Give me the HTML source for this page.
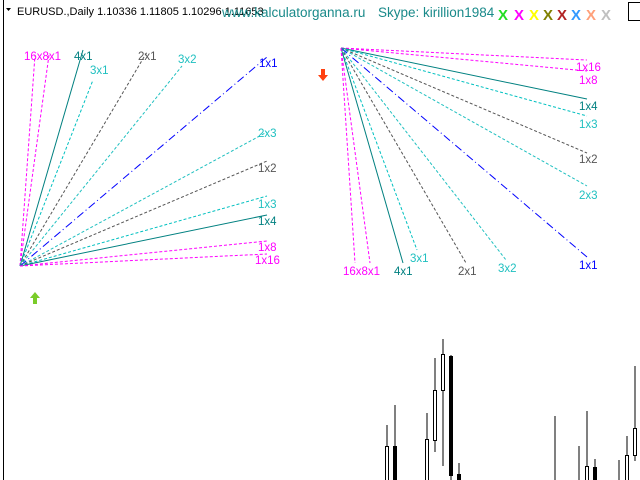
<!DOCTYPE html><html><head><style>body{margin:0;width:640px;height:480px;background:#fff;overflow:hidden;position:relative;font-family:"Liberation Sans",sans-serif}</style></head><body>
<svg width="640" height="480" style="position:absolute;left:0;top:0" font-family="Liberation Sans, sans-serif">
<line x1="3.5" y1="0" x2="3.5" y2="480" stroke="#000"/>
<path d="M6 8l5 0-2.5 3z" fill="#000"/>
<text x="17" y="15" font-size="11" fill="#000">EURUSD.,Daily  1.10336 1.11805 1.10296 1.11653</text>
<text x="222" y="17" font-size="13.5" fill="#1a8a8a">www.kalculatorganna.ru</text>
<text x="378" y="17" font-size="13.5" fill="#1a8a8a">Skype: kirillion1984</text>
<g font-size="15" font-weight="bold"><text x="498" y="20" fill="#22dd22">X</text><text x="514" y="20" fill="#ff00ff">X</text><text x="529" y="20" fill="#ffff00">X</text><text x="543" y="20" fill="#808000">X</text><text x="557" y="20" fill="#b22222">X</text><text x="571" y="20" fill="#3399ff">X</text><text x="586" y="20" fill="#ffa07a">X</text><text x="601" y="20" fill="#c0c0c0">X</text></g>
<rect x="628.5" y="2.5" width="14" height="18" fill="none" stroke="#000"/>
<g fill="none" stroke-width="1">
<line x1="20" y1="266" x2="35" y2="55" stroke="#f0f" stroke-dasharray="3,2"/>
<line x1="20" y1="266" x2="49" y2="55" stroke="#f0f" stroke-dasharray="3,2"/>
<line x1="20" y1="266" x2="83" y2="50" stroke="#008080"/>
<line x1="20" y1="266" x2="93" y2="80" stroke="#00c0c0" stroke-dasharray="3,2"/>
<line x1="20" y1="266" x2="147" y2="52" stroke="#555" stroke-dasharray="3,2"/>
<line x1="20" y1="266" x2="182" y2="66" stroke="#20c0c0" stroke-dasharray="3,2"/>
<line x1="20" y1="266" x2="267" y2="57" stroke="#00f" stroke-dasharray="8,3,1,3"/>
<line x1="20" y1="266" x2="267" y2="132" stroke="#20c0c0" stroke-dasharray="3,2"/>
<line x1="20" y1="266" x2="267" y2="161" stroke="#555" stroke-dasharray="3,2"/>
<line x1="20" y1="266" x2="267" y2="196" stroke="#00c0c0" stroke-dasharray="3,2"/>
<line x1="20" y1="266" x2="267" y2="215" stroke="#008080"/>
<line x1="20" y1="266" x2="267" y2="241" stroke="#f0f" stroke-dasharray="3,2"/>
<line x1="20" y1="266" x2="267" y2="254" stroke="#f0f" stroke-dasharray="3,2"/>
<line x1="341" y1="48" x2="587" y2="60" stroke="#f0f" stroke-dasharray="3,2"/>
<line x1="341" y1="48" x2="587" y2="71" stroke="#f0f" stroke-dasharray="3,2"/>
<line x1="341" y1="48" x2="587" y2="99" stroke="#008080"/>
<line x1="341" y1="48" x2="587" y2="116" stroke="#00c0c0" stroke-dasharray="3,2"/>
<line x1="341" y1="48" x2="587" y2="153" stroke="#555" stroke-dasharray="3,2"/>
<line x1="341" y1="48" x2="587" y2="186" stroke="#20c0c0" stroke-dasharray="3,2"/>
<line x1="341" y1="48" x2="587" y2="257" stroke="#00f" stroke-dasharray="8,3,1,3"/>
<line x1="341" y1="48" x2="506" y2="260" stroke="#20c0c0" stroke-dasharray="3,2"/>
<line x1="341" y1="48" x2="466" y2="263" stroke="#555" stroke-dasharray="3,2"/>
<line x1="341" y1="48" x2="417" y2="250" stroke="#00c0c0" stroke-dasharray="3,2"/>
<line x1="341" y1="48" x2="403" y2="263" stroke="#008080"/>
<line x1="341" y1="48" x2="370" y2="263" stroke="#f0f" stroke-dasharray="3,2"/>
<line x1="341" y1="48" x2="355" y2="263" stroke="#f0f" stroke-dasharray="3,2"/>
</g>
<g font-size="11.5">
<text x="24" y="60" fill="#f0f">16x8x1</text><text x="74" y="60" fill="#008080">4x1</text><text x="90" y="74" fill="#20c0c0">3x1</text><text x="138" y="60" fill="#555">2x1</text><text x="178" y="63" fill="#20c0c0">3x2</text><text x="259" y="67" fill="#00f">1x1</text>
<text x="258" y="137" fill="#20c0c0">2x3</text><text x="258" y="172" fill="#555">1x2</text><text x="258" y="208" fill="#20c0c0">1x3</text><text x="258" y="225" fill="#008080">1x4</text><text x="258" y="251" fill="#f0f">1x8</text><text x="255" y="264" fill="#f0f">1x16</text>
<text x="576" y="71" fill="#f0f">1x16</text><text x="579" y="84" fill="#f0f">1x8</text><text x="579" y="110" fill="#008080">1x4</text><text x="579" y="128" fill="#20c0c0">1x3</text><text x="579" y="163" fill="#555">1x2</text><text x="579" y="199" fill="#20c0c0">2x3</text><text x="579" y="269" fill="#00f">1x1</text>
<text x="343" y="275" fill="#f0f">16x8x1</text><text x="394" y="275" fill="#008080">4x1</text><text x="410" y="262" fill="#20c0c0">3x1</text><text x="458" y="275" fill="#555">2x1</text><text x="498" y="272" fill="#20c0c0">3x2</text>
</g>
<path d="M35 292l-5 6h3v6h4v-6h3z" fill="#7acc29"/>
<path d="M323 81l-5-6h3v-6h4v6h3z" fill="#ff4010"/>
<g stroke="#000" stroke-width="1" fill="none">
<line x1="387" y1="425" x2="387" y2="480"/><rect x="385.5" y="446.5" width="3" height="40" fill="#fff"/>
<line x1="395" y1="405" x2="395" y2="480"/><rect x="393.5" y="446.5" width="3" height="40" fill="#000"/>
<line x1="427" y1="413" x2="427" y2="480"/><rect x="425.5" y="439.5" width="3" height="50" fill="#fff"/>
<line x1="435" y1="358" x2="435" y2="452"/><rect x="433.5" y="390.5" width="3" height="50" fill="#fff"/>
<line x1="443" y1="339" x2="443" y2="466"/><rect x="441.5" y="354.5" width="3" height="36" fill="#fff"/>
<line x1="451" y1="355" x2="451" y2="480"/><rect x="449.5" y="356.5" width="3" height="119" fill="#000"/>
<line x1="459" y1="463" x2="459" y2="480"/><rect x="457.5" y="474.5" width="3" height="10" fill="#000"/>
<line x1="555" y1="416" x2="555" y2="480"/>
<line x1="579" y1="446" x2="579" y2="480"/>
<line x1="587" y1="411" x2="587" y2="480"/><rect x="585.5" y="466.5" width="3" height="20" fill="#fff"/>
<line x1="595" y1="459" x2="595" y2="480"/><rect x="593.5" y="467.5" width="3" height="20" fill="#000"/>
<line x1="619" y1="460" x2="619" y2="480"/>
<line x1="627" y1="436" x2="627" y2="480"/><rect x="625.5" y="455.5" width="3" height="30" fill="#fff"/>
<line x1="635" y1="366" x2="635" y2="461"/><rect x="633.5" y="428.5" width="3" height="27" fill="#fff"/>
</g>
</svg>
</body></html>
